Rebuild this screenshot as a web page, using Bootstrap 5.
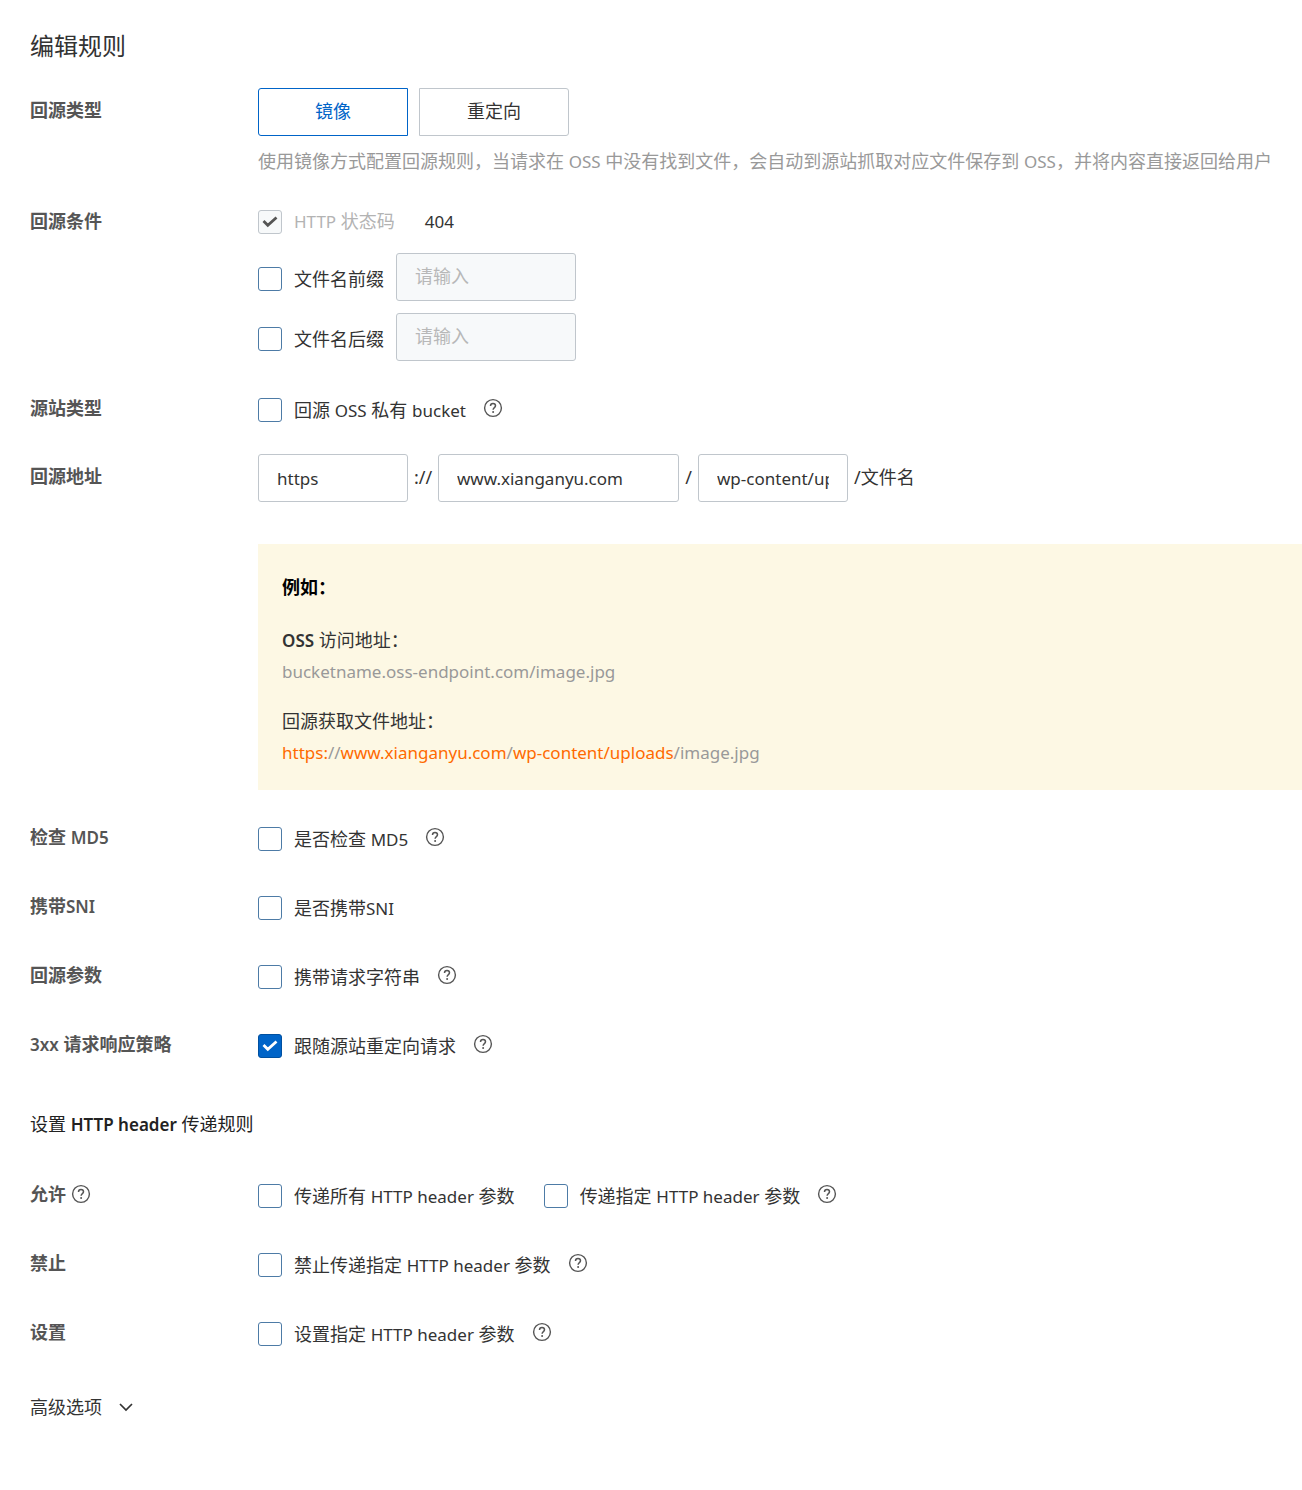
<!DOCTYPE html>
<html lang="zh-CN">
<head>
<meta charset="utf-8">
<meta name="viewport" content="width=device-width, initial-scale=1">
<title>编辑规则</title>
<link href="https://cdn.jsdelivr.net/npm/bootstrap@5.3.0/dist/css/bootstrap.min.css" rel="stylesheet">
<style>
body { font-family: "Noto Sans", "Noto Sans CJK SC", sans-serif; font-size: 18px; line-height: 28px; color: #333; }
.latin { font-size: 17px; }
.page { padding: 28px 0 60px 30px; }
.page-title { font-size: 24px; line-height: 36px; margin-bottom: 24px; font-weight: 400; }
.rule-row { display: grid; grid-template-columns: 228px minmax(0, 1fr); min-height: 36px; margin-bottom: 33px; }
.rule-label { font-size: 18px; font-weight: 700; color: #555; margin: 0; line-height: 28px; }
.rule-label .latin { font-weight: 600; }
.tall .rule-label { padding-top: 8px; }
.kind { margin-bottom: 32px; }
.conditions { margin-bottom: 31px; }
.address { margin-top: -9px; }
.modes { gap: 11px; }
.mode-btn { width: 150px; height: 48px; padding: 0 0 2px; font-size: 18px; color: #333; border: 1px solid #c0c6cc; border-radius: 0 3px 3px 0; background: #fff; }
.mode-btn.active { color: #0064c8; background: #fff; border-color: #0064c8; border-radius: 3px 0 0 3px; }
.hint { color: #999; margin: 12px 0 0; line-height: 26px; }
.tick { display: flex; align-items: center; min-height: 32px; margin: 0; padding: 0; }
.tick .form-check-input { float: none; flex: none; width: 24px; height: 24px; margin: 0 12px 0 0; border: 1px solid #4d7ba6; border-radius: 3px; background-color: #fff; background-size: 22px 22px; }
.tick .form-check-input:checked { background-color: #0064c8; border-color: #0050a0; background-image: url("data:image/svg+xml,%3Csvg xmlns='http://www.w3.org/2000/svg' viewBox='0 0 22 22'%3E%3Cpath d='M4.500 10l4.300 4.300L17.500 6.500' fill='none' stroke='%23fff' stroke-width='2.800'/%3E%3C/svg%3E"); }
.tick .form-check-input:disabled { opacity: 1; background-color: #f7f9fa; border-color: #c0c6cc; background-image: url("data:image/svg+xml,%3Csvg xmlns='http://www.w3.org/2000/svg' viewBox='0 0 22 22'%3E%3Cpath d='M4.500 10l4.300 4.300L17.500 6.500' fill='none' stroke='%23555' stroke-width='2.800'/%3E%3C/svg%3E"); }
.tick .form-check-input:disabled ~ label { opacity: 1; color: #b3b3b3; }
.status { min-height: 28px; margin-bottom: 19px; }
.code-value { margin-left: 30px; }
.with-field { margin-bottom: 12px; }
.field { height: 48px; padding: 1px 18px 0; font-size: 18px; color: #333; border: 1px solid #c0c6cc; border-radius: 3px; }
.field.latin { font-size: 17px; }
.field:disabled { background: #f7f9fa; padding: 0 18px 2px; }
.field::placeholder { color: #b8b8b8; }
.tick .field { margin: -2px 0 2px 12px; }
.w-s { width: 150px; } .w-m { width: 180px; } .w-l { width: 241px; }
.sep { width: 30px; text-align: center; padding-bottom: 2px; }
.sep-s { width: 19px; text-align: center; padding-bottom: 2px; }
.sep-end { padding: 0 0 2px 6px; }
.example { margin-top: 42px; padding: 29px 24px 22px; background: #fdf8e4; line-height: 31px; }
.example h3 { font-size: 18px; line-height: 28px; font-weight: 700; color: #000; margin: 0 0 24px; }
.example p { margin: 0 0 19px; }
.example p:last-child { margin: 0; }
.url { color: #999; font-size: 17px; } .url em { color: #ff6a00; font-style: normal; }
.help { flex: none; width: 20px; height: 20px; padding: 0; border: 0; background: none; display: inline-flex; color: #555; margin: 4px 0 0 17px; align-self: flex-start; }
.rule-label .help { margin: 4px 0 0 5px; }
.section { font-size: 18px; line-height: 28px; color: #222; margin: 44px 0 41px; font-weight: 400; }
.section .latin { font-weight: 600; }
.allow { gap: 0 29px; }
.more { padding: 0; border: 0; background: none; color: #333; margin-top: 39px; gap: 17px; }
</style>
</head>
<body>
<svg width="0" height="0" class="position-absolute" aria-hidden="true">
  <symbol id="q" viewBox="0 0 20 20"><circle cx="10" cy="10" r="8.4" fill="none" stroke="currentColor" stroke-width="1.4"/><path d="M7.5 8c0-1.500 1-2.500 2.500-2.500s2.500 1 2.500 2.300c0 1.700-2.400 1.900-2.400 4" fill="none" stroke="currentColor" stroke-width="1.5"/><circle cx="10.100" cy="13.900" r="1" fill="currentColor"/></symbol>
</svg>
<main class="page">
  <h1 class="page-title">编辑规则</h1>
  <form>
    <div class="rule-row tall kind">
      <h2 class="rule-label">回源类型</h2>
      <div>
        <div class="d-flex modes">
          <button type="button" class="btn mode-btn active">镜像</button>
          <button type="button" class="btn mode-btn">重定向</button>
        </div>
        <p class="hint">使用镜像方式配置回源规则，当请求在 <span class="latin">OSS</span> 中没有找到文件，会自动到源站抓取对应文件保存到 <span class="latin">OSS</span>，并将内容直接返回给用户</p>
      </div>
    </div>
    <div class="rule-row conditions">
      <h2 class="rule-label">回源条件</h2>
      <div>
        <div class="tick status"><input class="form-check-input" type="checkbox" id="c1" checked disabled><label for="c1"><span class="latin">HTTP</span> 状态码</label><span class="latin code-value">404</span></div>
        <div class="tick with-field"><input class="form-check-input" type="checkbox" id="c2"><label for="c2">文件名前缀</label><input class="form-control field w-m" aria-label="文件名前缀" placeholder="请输入" disabled></div>
        <div class="tick"><input class="form-check-input" type="checkbox" id="c3"><label for="c3">文件名后缀</label><input class="form-control field w-m" aria-label="文件名后缀" placeholder="请输入" disabled></div>
      </div>
    </div>
    <div class="rule-row">
      <h2 class="rule-label">源站类型</h2>
      <div class="tick align-self-start"><input class="form-check-input" type="checkbox" id="c4"><label for="c4">回源 <span class="latin">OSS</span> 私有 <span class="latin">bucket</span></label><button type="button" class="help" aria-label="帮助"><svg width="20" height="20"><use href="#q"/></svg></button></div>
    </div>
    <div class="rule-row tall address">
      <h2 class="rule-label">回源地址</h2>
      <div>
        <div class="d-flex align-items-center">
          <input class="form-control field latin w-s" aria-label="协议" value="https"><span class="sep">://</span><input class="form-control field latin w-l" aria-label="域名" value="www.xianganyu.com"><span class="sep-s">/</span><input class="form-control field latin w-s" aria-label="路径" value="wp-content/uploads"><span class="sep-end">/文件名</span>
        </div>
        <div class="example">
          <h3>例如：</h3>
          <p><span class="latin fw-semibold">OSS</span> 访问地址：<br><span class="url">bucketname.oss-endpoint.com/image.jpg</span></p>
          <p>回源获取文件地址：<br><span class="url"><em>https:</em>//<em>www.xianganyu.com</em>/<em>wp-content/uploads</em>/image.jpg</span></p>
        </div>
      </div>
    </div>
    <div class="rule-row">
      <h2 class="rule-label">检查 <span class="latin">MD5</span></h2>
      <div class="tick align-self-start"><input class="form-check-input" type="checkbox" id="c5"><label for="c5">是否检查 <span class="latin">MD5</span></label><button type="button" class="help" aria-label="帮助"><svg width="20" height="20"><use href="#q"/></svg></button></div>
    </div>
    <div class="rule-row">
      <h2 class="rule-label">携带<span class="latin">SNI</span></h2>
      <div class="tick align-self-start"><input class="form-check-input" type="checkbox" id="c6"><label for="c6">是否携带<span class="latin">SNI</span></label></div>
    </div>
    <div class="rule-row">
      <h2 class="rule-label">回源参数</h2>
      <div class="tick align-self-start"><input class="form-check-input" type="checkbox" id="c7"><label for="c7">携带请求字符串</label><button type="button" class="help" aria-label="帮助"><svg width="20" height="20"><use href="#q"/></svg></button></div>
    </div>
    <div class="rule-row">
      <h2 class="rule-label"><span class="latin">3xx</span> 请求响应策略</h2>
      <div class="tick align-self-start"><input class="form-check-input" type="checkbox" id="c8" checked><label for="c8">跟随源站重定向请求</label><button type="button" class="help" aria-label="帮助"><svg width="20" height="20"><use href="#q"/></svg></button></div>
    </div>
    <h2 class="section">设置 <span class="latin">HTTP header</span> 传递规则</h2>
    <div class="rule-row">
      <h2 class="rule-label d-flex">允许<button type="button" class="help" aria-label="帮助"><svg width="20" height="20"><use href="#q"/></svg></button></h2>
      <div class="d-flex align-self-start flex-wrap allow">
        <div class="tick"><input class="form-check-input" type="checkbox" id="c9"><label for="c9">传递所有 <span class="latin">HTTP header</span> 参数</label></div>
        <div class="tick"><input class="form-check-input" type="checkbox" id="c10"><label for="c10">传递指定 <span class="latin">HTTP header</span> 参数</label><button type="button" class="help" aria-label="帮助"><svg width="20" height="20"><use href="#q"/></svg></button></div>
      </div>
    </div>
    <div class="rule-row">
      <h2 class="rule-label">禁止</h2>
      <div class="tick align-self-start"><input class="form-check-input" type="checkbox" id="c11"><label for="c11">禁止传递指定 <span class="latin">HTTP header</span> 参数</label><button type="button" class="help" aria-label="帮助"><svg width="20" height="20"><use href="#q"/></svg></button></div>
    </div>
    <div class="rule-row mb-0">
      <h2 class="rule-label">设置</h2>
      <div class="tick align-self-start"><input class="form-check-input" type="checkbox" id="c12"><label for="c12">设置指定 <span class="latin">HTTP header</span> 参数</label><button type="button" class="help" aria-label="帮助"><svg width="20" height="20"><use href="#q"/></svg></button></div>
    </div>
    <button type="button" class="more d-flex align-items-center">高级选项<svg width="14" height="10" viewBox="0 0 14 10" fill="none" stroke="currentColor" stroke-width="1.700"><path d="M1 2l6 6 6-6"/></svg></button>
  </form>
</main>
<script src="https://cdn.jsdelivr.net/npm/bootstrap@5.3.0/dist/js/bootstrap.bundle.min.js"></script>
</body>
</html>
